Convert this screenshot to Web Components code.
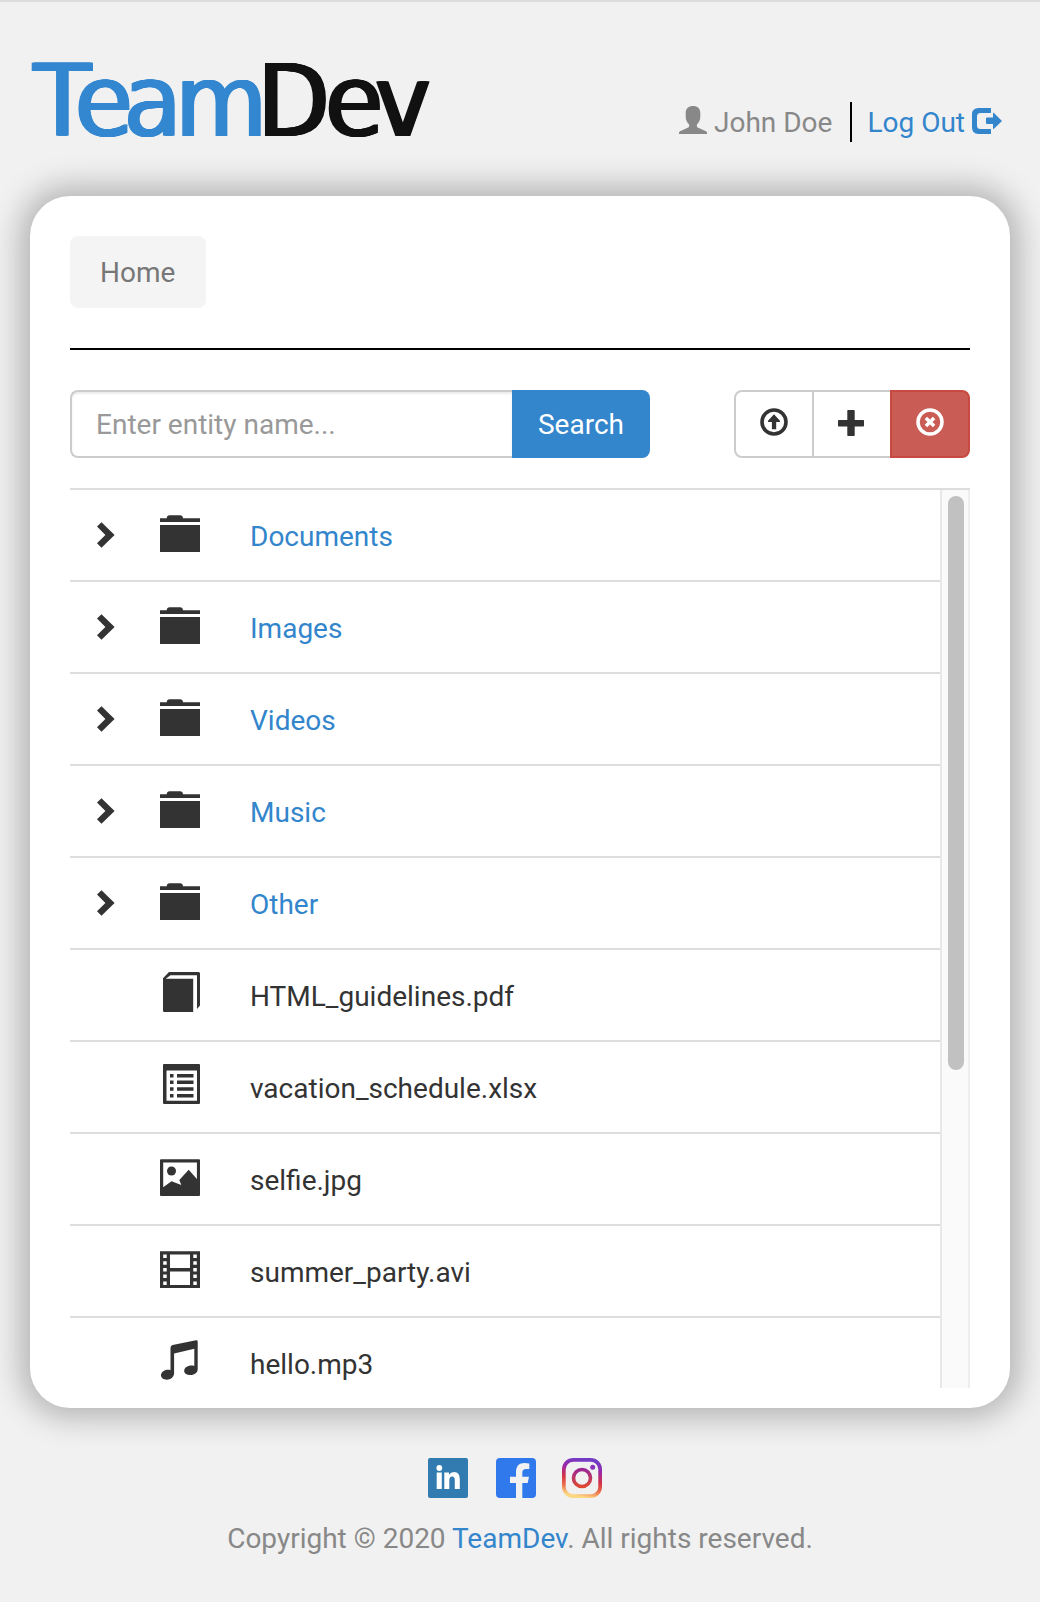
<!DOCTYPE html>
<html lang="en">
<head>
<meta charset="utf-8">
<title>File Explorer</title>
<style>
html,body{margin:0;padding:0}
body{background:#f1f1f1;font-family:Roboto,sans-serif;font-size:28px;line-height:40px;color:#333;height:1602px;overflow:hidden}
</style>
</head>
<body>
<file-app></file-app>
<script>
const define = (name, css, html) => customElements.define(name, class extends HTMLElement {
  constructor() {
    super();
    this.attachShadow({mode: 'open'}).innerHTML = `<style>*{box-sizing:border-box}${css}</style>${typeof html === 'function' ? html(this) : html}`;
  }
});

const ICONS = {
  user: [28, 28, '<path d="M14 0c4.400 0 7.300 2.600 7.300 7v4c0 3-1.500 6-3.400 7.500v1.500c0 .8 0 1 .8 1.400L27 25.300q1 .6 1 1.500V28H0v-1.200q0-.9 1-1.500l8.300-3.900c.8-.4.800-.6.800-1.400v-1.500C8.200 17 6.700 14 6.700 11V7c0-4.400 2.900-7 7.300-7z"/>'],
  logout: [30, 26, '<path d="M18.500 0h-12Q0 0 0 6.500v13Q0 26 6.500 26h12l.5-.5V21.500l-.5-.5H8.500Q5 21 5 17.500v-9Q5 5 8.500 5h10l.5-.5V.5z"/><path d="M14.800 9.500H21V5l.7-.2L30 13l-8.300 8-.7-.2V16h-6.200l-.8-.8v-4.900z"/>'],
  upload: [28, 28, '<circle cx="14" cy="14" r="12" fill="none" stroke="currentColor" stroke-width="3.600"/><path d="M14 6.300l6.200 6.700-.4.900H16.200v7.300H11.900v-7.300H8.200l-.4-.9z"/>'],
  plus: [26, 26, '<path d="M10 0h6q.7 0 .7.7v9.300h8.600q.7 0 .7.700v5q0 .7-.7.700h-8.600v8.900q0 .7-.7.700h-6q-.7 0-.7-.7v-8.900H.7q-.7 0-.7-.7v-5q0-.7.7-.7h8.600V.7q0-.7.7-.7z"/>'],
  remove: [28, 28, '<circle cx="14" cy="14" r="12" fill="none" stroke="currentColor" stroke-width="3.500"/><path d="M9.900 9.900l8.200 8.200M18.100 9.900l-8.200 8.200" stroke="currentColor" stroke-width="3.500"/>'],
  chevron: [18, 26, '<path d="M4.500.2L17.600 12.900 4.500 25.700 0 21.300l8.400-8.400L0 4.500z"/>'],
  folder: [40, 40, '<path d="M0 6.200h6.700q.2-3 3-3H20q2.800 0 3 3h17V10H0zM0 13h40v27H0z"/>'],
  pdf: [40, 40, '<path d="M9 0h29.500Q40 0 40 1.500V33.500L37 37V3.300H10.500L5.700 6.700h27.500V40H4.300Q3 40 3 38.700V6.300z"/>'],
  list: [40, 40, '<path fill-rule="evenodd" d="M4 0h35q1 0 1 1v38q0 1-1 1H4q-1 0-1-1V1q0-1 1-1zM6.500 6.500v30.300H37V6.500z"/><path d="M10 10h3.500v3.500H10zM17 10h16.500v3.500H17zM10 16.600h3.500v3.500H10zM17 16.600h16.500v3.500H17zM10 23.300h3.500v3.500H10zM17 23.300h16.500v3.500H17zM10 30h3.500v3.500H10zM17 30h16.500v3.500H17z"/>'],
  picture: [40, 40, '<path fill-rule="evenodd" d="M1 3.200h38q1 0 1 1V39q0 1-1 1H1q-1 0-1-1V4.200q0-1 1-1zM3.200 6.500v24.700l8.300-6 9.800 3.700-2-4.900 9.400-10.200 8.200 9.200V6.500z"/><circle cx="11.500" cy="15" r="4.500"/>'],
  film: [40, 40, '<path fill-rule="evenodd" d="M0 3.200h40V40H0zM10 6.500V20h20V6.500zM10 23.400V37h20V23.400zM3.200 6.500V10H6.700V6.500zM3.200 13.200v3.500H6.700v-3.500zM3.200 20v3.500H6.700V20zM3.200 26.600v3.500H6.700v-3.500zM3.200 33.400v3.500H6.700v-3.500zM33.300 6.500V10h3.500V6.500zM33.300 13.200v3.500h3.500v-3.500zM33.300 20v3.500h3.500V20zM33.300 26.600v3.500h3.500v-3.500zM33.300 33.400v3.500h3.500v-3.500z"/>'],
  music: [40, 40, '<path d="M36 .2q1.600-.3 1.700 1.300V29c0 3.500-3 6-7.200 6-3.500 0-6.300-1.500-6.300-4.100 0-3 3.300-5.300 7.300-5.300 1 0 2 .1 2.800.4V8.700L14.100 13.600V33.500c-.2 3.600-3.600 6.200-7.300 6.200C3.500 39.700 1 38 1 35.300c0-3 3-5.500 7-5.500 1 0 1.800.1 2.500.4V7.800Q10.500 5.600 12.600 5.100z"/>'],
  linkedin: [40, 40, '<rect width="40" height="40" rx="2" fill="#317bb1"/><g fill="#fff"><circle cx="11.300" cy="10" r="2.900"/><path d="M8.700 14.500h5.100V31H8.700zM16.300 14.500h4.700v2.200q1.600-2.600 5.100-2.600 5.700 0 5.700 7.200V31h-5v-8.800q0-3.700-2.600-3.700-2.900 0-2.900 3.900V31h-5z"/></g>'],
  facebook: [40, 40, '<rect width="40" height="40" rx="4" fill="#2f79ec"/><path fill="#f1f1f1" d="M20 40V25h-6v-6.300h6v-4.500C20 8 23 4.900 28.500 4.900q2.600 0 4.800.5v5.500h-3.200q-3.800 0-3.800 3.700v4.100H33L31.700 25h-5.400v15z"/>'],
  instagram: [40, 40, '<defs><linearGradient id="g" x1=".6" y1="0" x2=".4" y2="1"><stop offset="0" stop-color="#713cc5"/><stop offset=".25" stop-color="#9b26a9"/><stop offset=".55" stop-color="#d53443"/><stop offset=".78" stop-color="#ed704b"/><stop offset="1" stop-color="#fcd883"/></linearGradient></defs><g fill="none" stroke="url(#g)" stroke-width="3.700"><rect x="1.850" y="1.850" width="36.300" height="36.300" rx="9.500"/></g><defs><linearGradient id="h" x1="0" y1="0" x2="0" y2="1"><stop offset="0" stop-color="#9b2694"/><stop offset="1" stop-color="#df4832"/></linearGradient></defs><circle cx="20" cy="20" r="8.500" fill="none" stroke="url(#h)" stroke-width="3.600"/><circle cx="30.700" cy="9.300" r="2.500" fill="#8a33bd"/>']
};

define('ui-icon', ':host{display:block;flex:none}svg{display:block}', el => {
  const [w, h, body] = ICONS[el.getAttribute('name')];
  return `<svg width="${w}" height="${h}" viewBox="0 0 ${w} ${h}" fill="currentColor">${body}</svg>`;
});

define('team-logo', `
:host{display:block;width:400px;height:100px;font:99px/100px "DejaVu Sans",sans-serif;font-kerning:none;white-space:nowrap;color:#3387d0}
div{transform:scaleX(.95);transform-origin:0 0;padding-left:2px;text-shadow:1px 0 currentColor,2px 0 currentColor,3px 0 currentColor,3.500px 0 currentColor}
b{font-weight:400;color:#111}`,
`<div><span style="letter-spacing:-17px">T</span><span style="letter-spacing:-9.400px">e</span><span style="letter-spacing:-6.400px">a</span><span style="letter-spacing:-10.200px">m</span><b><span style="letter-spacing:-4.700px">D</span><span style="letter-spacing:-8.600px">e</span>v</b></div>`);

define('app-header', `
:host{display:flex;justify-content:space-between;height:196px;padding:50px 38px 0 30px;border-top:2px solid #dcdcdc}
.user{display:flex;align-items:center;height:40px;margin-top:50px;color:#888}
.name{margin-left:7px;padding-top:2px}
.out{display:flex;align-items:center;height:40px;margin-left:18px;padding-left:15px;border-left:2px solid #000;color:#3385cc}
.out span{padding-top:2px}
.out ui-icon{margin-left:7px;margin-top:-2px}
.user>ui-icon{margin-top:-4px}`,
`<team-logo></team-logo><div class="user"><ui-icon name="user"></ui-icon><span class="name">John Doe</span><div class="out"><span>Log Out</span><ui-icon name="logout"></ui-icon></div></div>`);

define('bread-crumbs', `
:host{display:flex;height:114px;border-bottom:2px solid #000}
span{width:136px;height:72px;padding:17px 30px 15px;border-radius:8px;background:#f4f4f4;color:#777}`,
`<span><slot></slot></span>`);

define('search-bar', `
:host{display:flex;width:580px}
input{width:442px;height:68px;padding:0 24px;border:2px solid #ccc;border-right:0;border-radius:8px 0 0 8px;background:#fff;box-shadow:inset 0 2px 2px rgba(0,0,0,.075);font:inherit;outline:0}
input::placeholder{color:#999;opacity:1}
button{width:138px;height:68px;padding:2px 0 0;border:0;border-radius:0 8px 8px 0;background:#3385cc;color:#fff;font:inherit}`,
`<input placeholder="Enter entity name..."><button>Search</button>`);

define('action-group', `
:host{display:flex;width:236px;height:68px}
button{display:flex;align-items:center;justify-content:center;height:68px;padding:0 0 4px;border:2px solid #ccc;background:#fff;color:#333}
.up{width:80px;border-radius:8px 0 0 8px}
.add{width:76px;border-left:0;border-right:0;padding:0 2px 2px 0}
.del{width:80px;border-color:#c64a40;border-radius:0 8px 8px 0;background:#c95c54;color:#fff}`,
`<button class="up"><ui-icon name="upload"></ui-icon></button><button class="add"><ui-icon name="plus"></ui-icon></button><button class="del"><ui-icon name="remove"></ui-icon></button>`);

define('file-row', `
:host{display:flex;height:92px;border-top:2px solid #ddd;color:#333}
.toggle{width:90px;padding:32px 0 0 27px}
.kind{width:90px;padding-top:22px}
.name{padding-top:27px}
:host([folder]) .name{color:#3385cc}`,
el => `<div class="toggle">${el.hasAttribute('folder') ? '<ui-icon name="chevron"></ui-icon>' : ''}</div><div class="kind"><ui-icon name="${el.getAttribute('icon') || 'folder'}"></ui-icon></div><div class="name"><slot></slot></div>`);

define('scroll-bar', `
:host{display:block;width:30px;margin-top:2px;padding:6px 0 0 6px;border-left:2px solid #e8e8e8;border-right:2px solid #ededed;background:#fafafa}
div{width:16px;height:574px;border-radius:8px;background:#c1c1c1}`, `<div></div>`);

define('file-list', `
:host{display:flex;height:900px;overflow:hidden;background:linear-gradient(#ddd,#ddd) top/100% 2px no-repeat}
.rows{flex:1}`, `<div class="rows"><slot></slot></div><scroll-bar></scroll-bar>`);

define('app-footer', `
:host{display:flex;flex-direction:column;align-items:center;padding-top:50px;color:#888}
.social{display:flex;width:174px;justify-content:flex-start;margin-right:10px}
.social ui-icon+ui-icon{margin-left:28px}
.social ui-icon:last-child{margin-left:26px}
p{margin:21px 0 0}
a{color:#3385cc}`,
`<div class="social"><ui-icon name="linkedin"></ui-icon><ui-icon name="facebook"></ui-icon><ui-icon name="instagram"></ui-icon></div><p>Copyright © 2020 <a>TeamDev</a>. All rights reserved.</p>`);

define('file-app', `
:host{display:block}
main{height:1212px;margin:0 30px;padding:40px 40px 20px;border-radius:40px;background:#fff;box-shadow:0 0 30px 10px rgba(0,0,0,.25)}
.tools{display:flex;justify-content:space-between;margin:40px 0 30px}`,
`<app-header></app-header>
<main>
<bread-crumbs>Home</bread-crumbs>
<div class="tools"><search-bar></search-bar><action-group></action-group></div>
<file-list>
<file-row folder>Documents</file-row>
<file-row folder>Images</file-row>
<file-row folder>Videos</file-row>
<file-row folder>Music</file-row>
<file-row folder>Other</file-row>
<file-row icon="pdf">HTML_guidelines.pdf</file-row>
<file-row icon="list">vacation_schedule.xlsx</file-row>
<file-row icon="picture">selfie.jpg</file-row>
<file-row icon="film">summer_party.avi</file-row>
<file-row icon="music">hello.mp3</file-row>
</file-list>
</main>
<app-footer></app-footer>`);
</script>
</body>
</html>
